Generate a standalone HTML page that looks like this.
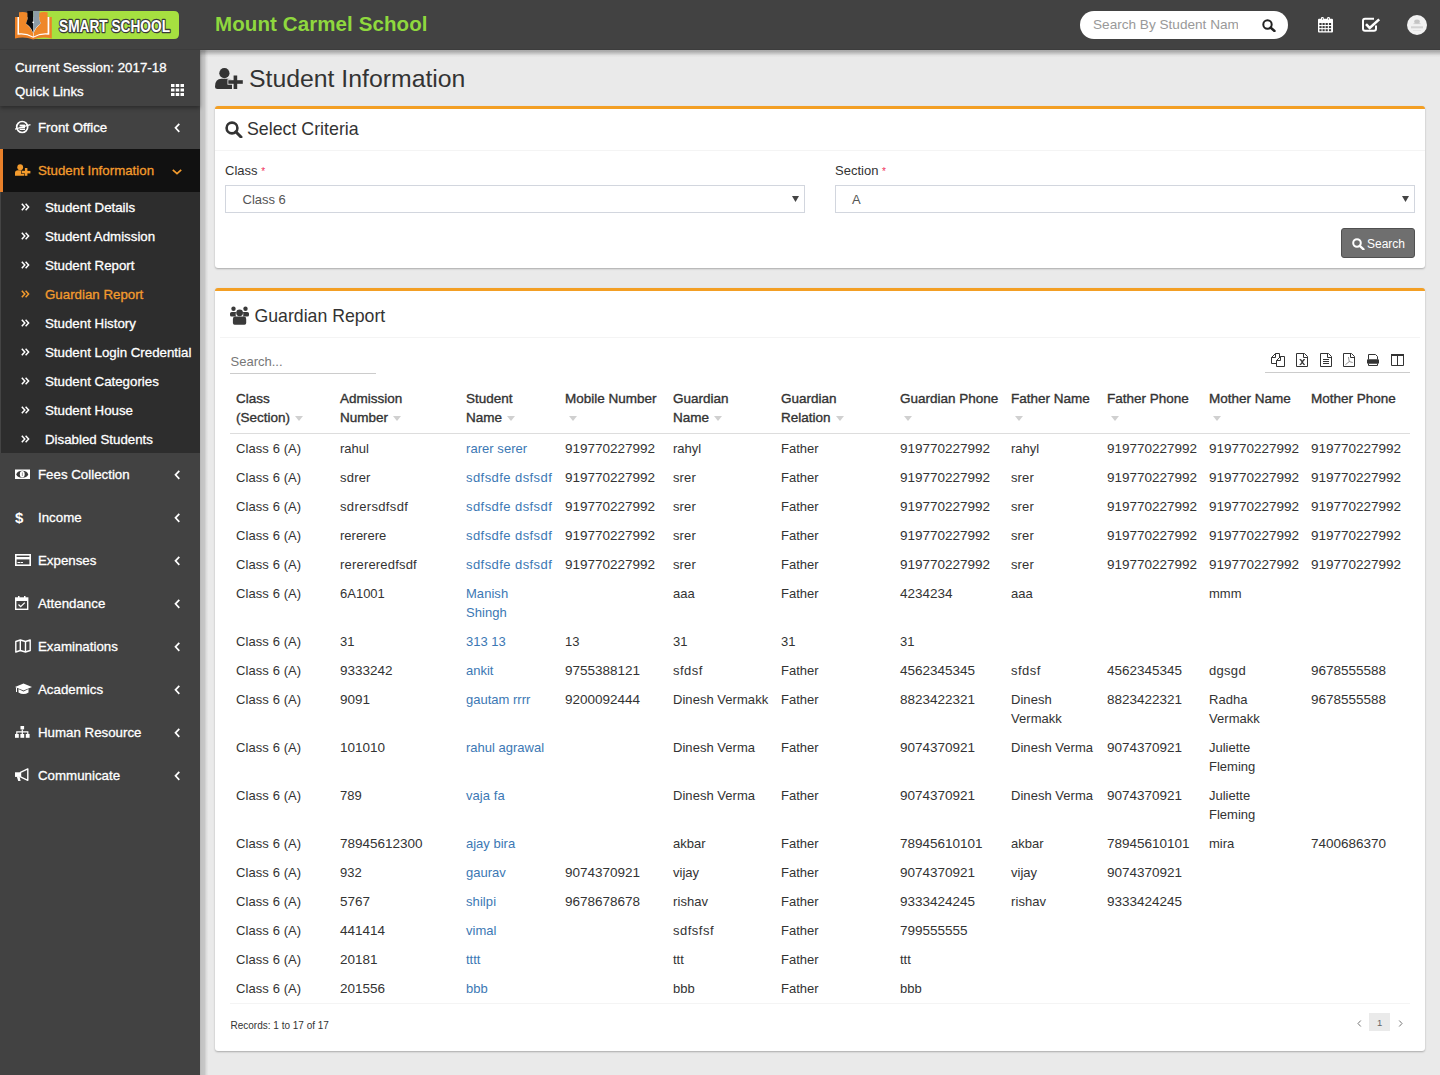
<!DOCTYPE html>
<html><head><meta charset="utf-8">
<style>
*{box-sizing:border-box}
svg{display:block}
html,body{margin:0;padding:0;width:1440px;height:1075px;overflow:hidden;background:#eaeaea;font-family:"Liberation Sans",sans-serif;color:#333}
.a{position:absolute;white-space:nowrap}
#hdr{position:absolute;left:0;top:0;width:1440px;height:50px;background:#424242;z-index:5;border-bottom:1px solid #3c3c3c}
#side{position:absolute;left:0;top:50px;width:200px;height:1025px;background:#424242;z-index:4}
#content{position:absolute;left:0;top:0;width:1440px;height:1075px;background:#eaeaea}
.logo{position:absolute;left:33px;top:11px;width:146px;height:29px;background:#a8e03e;border-radius:0 5px 5px 0}
.logotxt{position:absolute;left:59px;top:16px;font-weight:bold;font-size:17px;color:#fff;letter-spacing:-0.5px;transform:scaleX(.84);transform-origin:0 0;text-shadow:-1px -1px 0 #333,1px -1px 0 #333,-1px 1px 0 #333,1px 1px 0 #333}
.title{left:215px;top:12px;font-size:20.5px;font-weight:bold;color:#8fd83e;letter-spacing:0.1px}
.srch{left:1080px;top:11px;width:208px;height:28px;background:#fff;border-radius:14px}
.srch span{position:absolute;left:13px;top:6px;width:145px;overflow:hidden;font-size:13.6px;color:#999;white-space:nowrap}
.up{left:0;top:0;width:200px;height:56px;background:#424242;box-shadow:0 2px 4px rgba(0,0,0,.35)}
.st{font-size:13.3px;font-weight:normal;color:#fff;-webkit-text-stroke:0.3px #fff}
.mi{position:absolute;left:0;width:200px;height:43px}
.mi .t{position:absolute;left:38px;top:14px;font-size:13.3px;font-weight:normal;-webkit-text-stroke:0.3px currentColor;color:#fff;white-space:nowrap}
.mi .ic{position:absolute;left:15px;top:14px;width:16px;height:14px}
.mi .ch{position:absolute;left:174px;top:17px}
.act{background:#111;border-left:3px solid #e8802a}
.act .t{left:35px;color:#f39b2d}
.act .ic{left:12px}
.act .ch{left:169px;top:20px}
.sub{position:absolute;left:0;top:142px;width:200px;height:261px;background:#2d2d2d;border-left:1px solid #444}
.si{position:absolute;left:0;width:199px;height:29px}
.si .t{position:absolute;left:44px;top:7.5px;font-size:13.3px;font-weight:normal;-webkit-text-stroke:0.3px currentColor;color:#fff;white-space:nowrap}
.si .ic{position:absolute;left:20px;top:11px}

.box{background:#fff;border-top:3px solid #f39f24;border-radius:3px;box-shadow:0 1px 2px rgba(0,0,0,.28)}
.sel{background:#fff;border:1px solid #d2d6de}
.btn{background:#6f6f6f;border:1px solid #505050;border-radius:3px}
.th{font-size:13.5px;font-weight:normal;line-height:19px;color:#333;-webkit-text-stroke:0.35px #333}
.sa{display:inline-block;width:0;height:0;border-left:4px solid transparent;border-right:4px solid transparent;border-top:5px solid #d0d0d0;vertical-align:1px}
.td{font-size:13px;line-height:19px;color:#333}
.td.num{font-size:13.5px}
.lk{color:#3c78b4}
</style></head><body>
<div id="content"><svg class="a" style="left:215px;top:68px" width="29" height="21" viewBox="0 0 29 21"><circle cx="9.4" cy="5.2" r="5.1" fill="#333"/><path d="M0 18.5 Q0 10.8 6.5 10.8 L12.5 10.8 Q15.5 10.8 17 12 L17 21 L2.5 21 Q0 21 0 18.5 Z" fill="#333"/><rect x="17" y="7" width="6" height="14" fill="#eaeaea"/><rect x="12.5" y="11.2" width="15.6" height="5.5" fill="#eaeaea"/><rect x="18.6" y="7.5" width="3.6" height="13.5" fill="#333"/><rect x="13.3" y="12.2" width="14.5" height="3.6" fill="#333"/></svg>
<div class="a" style="left:249px;top:67.01px;font-size:24.8px;line-height:1;color:#333">Student Information</div>
<div class="a box" style="left:215px;top:106px;width:1210px;height:162px"></div>
<svg class="a" style="left:225px;top:121px" width="18" height="17" viewBox="0 0 18 17"><circle cx="7" cy="7" r="5.4" stroke="#333" stroke-width="2.6" fill="none"/><path d="M10.8 10.8 L16 16" stroke="#333" stroke-width="3" stroke-linecap="round"/></svg>
<div class="a" style="left:247px;top:120.93px;font-size:17.8px;line-height:1;color:#333">Select Criteria</div>
<div class="a" style="left:215px;top:150px;width:1210px;height:1px;background:#f4f4f4"></div>
<div class="a" style="left:225px;top:163.80px;font-size:13px;line-height:1;color:#333">Class <span style="color:#f0305a;font-size:10px;position:relative;top:0px">*</span></div>
<div class="a" style="left:835px;top:163.80px;font-size:13px;line-height:1;color:#333">Section <span style="color:#f0305a;font-size:10px;position:relative;top:0px">*</span></div>
<div class="a sel" style="left:225px;top:185px;width:580px;height:28px"></div>
<div class="a sel" style="left:835px;top:185px;width:580px;height:28px"></div>
<div class="a" style="left:242.5px;top:192.75px;font-size:13px;line-height:1;color:#555">Class 6</div>
<div class="a" style="left:852px;top:192.75px;font-size:13px;line-height:1;color:#555">A</div>
<div class="a" style="left:792px;top:196px"><svg width="7" height="6" viewBox="0 0 7 6"><path d="M0 0 L7 0 L3.5 6 Z" fill="#444"/></svg></div>
<div class="a" style="left:1402px;top:196px"><svg width="7" height="6" viewBox="0 0 7 6"><path d="M0 0 L7 0 L3.5 6 Z" fill="#444"/></svg></div>
<div class="a btn" style="left:1341px;top:228px;width:74px;height:30px"></div>
<svg class="a" style="left:1352px;top:238px" width="13" height="12" viewBox="0 0 13 12"><circle cx="5" cy="5" r="3.8" stroke="#fff" stroke-width="2" fill="none"/><path d="M7.8 7.8 L11.5 11.3" stroke="#fff" stroke-width="2.4" stroke-linecap="round"/></svg>
<div class="a" style="left:1367px;top:237.74px;font-size:12px;line-height:1;color:#fff">Search</div>
<div class="a box" style="left:215px;top:288px;width:1210px;height:763px"></div>
<svg class="a" style="left:230px;top:306px" width="20" height="19" viewBox="0 0 20 19"><g fill="#3a3a3a"><circle cx="3.5" cy="2.8" r="2.2"/><circle cx="15.5" cy="2.8" r="2.2"/><path d="M0 7.6 Q0 5.9 1.7 5.9 L5.2 5.9 Q5.8 5.9 6.1 6.3 Q5.6 7.5 5.7 8.8 Q5.7 9.8 6 10.6 L1.5 10.6 Q0 10.6 0 9.1 Z"/><path d="M19 7.6 Q19 5.9 17.3 5.9 L13.8 5.9 Q13.2 5.9 12.9 6.3 Q13.4 7.5 13.3 8.8 Q13.3 9.8 13 10.6 L17.5 10.6 Q19 10.6 19 9.1 Z"/><circle cx="9.6" cy="6.8" r="3.4"/><path d="M2.9 13 Q2.9 10.6 5.3 10.6 L13.8 10.6 Q16.2 10.6 16.2 13 L16.2 17 Q16.2 18.7 14.5 18.7 L4.6 18.7 Q2.9 18.7 2.9 17 Z"/></g></svg>
<div class="a" style="left:254.5px;top:308.02px;font-size:17.7px;line-height:1;color:#333">Guardian Report</div>
<div class="a" style="left:220px;top:337px;width:1200px;height:1px;background:#f4f4f4"></div>
<div class="a" style="left:230.5px;top:355.00px;font-size:13px;line-height:1;color:#777">Search...</div>
<div class="a" style="left:230px;top:373px;width:146px;height:1px;background:#ccc"></div>
<div class="a" style="left:1265px;top:372px;width:145px;height:1px;background:#ccc"></div>
<svg class="a" style="left:1268px;top:350px" width="150" height="20" viewBox="0 0 150 20"><g stroke="#333" stroke-width="1" fill="none" stroke-linejoin="miter">
<path d="M11.5 7 L11.5 3.5 L7.5 3.5 L3.5 7.5 L3.5 13.5 L8.5 13.5"/><path d="M7.5 3.5 L7.5 7.5 L3.5 7.5"/>
<path d="M12.5 6.5 L16.5 6.5 L16.5 16.5 L8.5 16.5 L8.5 10.5 Z"/><path d="M12.5 6.5 L12.5 10.5 L8.5 10.5"/>
<path d="M28.5 3.5 L36.5 3.5 L39.5 6.5 L39.5 16.5 L28.5 16.5 Z"/><path d="M35.5 3.5 L35.5 7.5 L39.5 7.5"/>
<path d="M52.5 3.5 L60.5 3.5 L63.5 6.5 L63.5 16.5 L52.5 16.5 Z"/><path d="M59.5 3.5 L59.5 7.5 L63.5 7.5"/>
<path d="M55 9.5 L61 9.5 M55 11.5 L61 11.5 M55 13.5 L61 13.5"/>
<path d="M75.5 3.5 L83.5 3.5 L86.5 6.5 L86.5 16.5 L75.5 16.5 Z"/><path d="M82.5 3.5 L82.5 7.5 L86.5 7.5"/>
<path d="M80.4 7 L81.3 11.6 L77.4 14.7 M81.3 11.6 L84.7 12.5" stroke="#777" stroke-width="0.8"/>
<path d="M100.5 9.5 L100.5 4.5 L107.5 4.5 L109.5 6.5 L109.5 9.5"/><path d="M100.5 13.5 L100.5 15.5 L109.5 15.5 L109.5 13.5"/>
<path d="M123.5 5.5 L123.5 15.5 L135.5 15.5 L135.5 5.5 M129.5 5.5 L129.5 15.5"/>
</g>
<path d="M31.5 9.5 L33 9.5 L34.3 11.3 L35.6 9.5 L37 9.5 M31.6 14.6 L33 14.6 L34.3 12.6 L35.6 14.6 L37 14.6" stroke="#333" stroke-width="0.8" fill="none"/>
<path d="M32.4 9.6 L36.2 14.5 M36.2 9.6 L32.4 14.5" stroke="#333" stroke-width="1.1"/>
<rect x="99" y="9.3" width="12" height="4.4" rx="1" fill="#333"/>
<rect x="123" y="4" width="13" height="2" fill="#333"/>
</svg>
<div class="a th" style="left:236px;top:389px">Class</div>
<div class="a th" style="left:236px;top:408px">(Section)<span class="sa" style="margin-left:5px"></span></div>
<div class="a th" style="left:340px;top:389px">Admission</div>
<div class="a th" style="left:340px;top:408px">Number<span class="sa" style="margin-left:5px"></span></div>
<div class="a th" style="left:466px;top:389px">Student</div>
<div class="a th" style="left:466px;top:408px">Name<span class="sa" style="margin-left:5px"></span></div>
<div class="a th" style="left:565px;top:389px">Mobile Number</div>
<div class="a th" style="left:569px;top:408px"><span class="sa"></span></div>
<div class="a th" style="left:673px;top:389px">Guardian</div>
<div class="a th" style="left:673px;top:408px">Name<span class="sa" style="margin-left:5px"></span></div>
<div class="a th" style="left:781px;top:389px">Guardian</div>
<div class="a th" style="left:781px;top:408px">Relation<span class="sa" style="margin-left:5px"></span></div>
<div class="a th" style="left:900px;top:389px">Guardian Phone</div>
<div class="a th" style="left:904px;top:408px"><span class="sa"></span></div>
<div class="a th" style="left:1011px;top:389px">Father Name</div>
<div class="a th" style="left:1015px;top:408px"><span class="sa"></span></div>
<div class="a th" style="left:1107px;top:389px">Father Phone</div>
<div class="a th" style="left:1111px;top:408px"><span class="sa"></span></div>
<div class="a th" style="left:1209px;top:389px">Mother Name</div>
<div class="a th" style="left:1213px;top:408px"><span class="sa"></span></div>
<div class="a th" style="left:1311px;top:389px">Mother Phone</div>
<div class="a" style="left:230px;top:433px;width:1180px;height:1px;background:#ddd"></div>
<div class="a td" style="left:236px;top:439px;letter-spacing:0.09px;">Class 6 (A)</div>
<div class="a td" style="left:340px;top:439px;">rahul</div>
<div class="a td lk" style="left:466px;top:439px;letter-spacing:0.05px;">rarer serer</div>
<div class="a td num" style="left:565px;top:439px;">919770227992</div>
<div class="a td" style="left:673px;top:439px;">rahyl</div>
<div class="a td" style="left:781px;top:439px;">Father</div>
<div class="a td num" style="left:900px;top:439px;">919770227992</div>
<div class="a td" style="left:1011px;top:439px;">rahyl</div>
<div class="a td num" style="left:1107px;top:439px;">919770227992</div>
<div class="a td num" style="left:1209px;top:439px;">919770227992</div>
<div class="a td num" style="left:1311px;top:439px;">919770227992</div>
<div class="a td" style="left:236px;top:468px;letter-spacing:0.09px;">Class 6 (A)</div>
<div class="a td" style="left:340px;top:468px;letter-spacing:0.20px;">sdrer</div>
<div class="a td lk" style="left:466px;top:468px;letter-spacing:0.43px;">sdfsdfe dsfsdf</div>
<div class="a td num" style="left:565px;top:468px;">919770227992</div>
<div class="a td" style="left:673px;top:468px;letter-spacing:0.12px;">srer</div>
<div class="a td" style="left:781px;top:468px;">Father</div>
<div class="a td num" style="left:900px;top:468px;">919770227992</div>
<div class="a td" style="left:1011px;top:468px;letter-spacing:0.12px;">srer</div>
<div class="a td num" style="left:1107px;top:468px;">919770227992</div>
<div class="a td num" style="left:1209px;top:468px;">919770227992</div>
<div class="a td num" style="left:1311px;top:468px;">919770227992</div>
<div class="a td" style="left:236px;top:497px;letter-spacing:0.09px;">Class 6 (A)</div>
<div class="a td" style="left:340px;top:497px;letter-spacing:0.36px;">sdrersdfsdf</div>
<div class="a td lk" style="left:466px;top:497px;letter-spacing:0.43px;">sdfsdfe dsfsdf</div>
<div class="a td num" style="left:565px;top:497px;">919770227992</div>
<div class="a td" style="left:673px;top:497px;letter-spacing:0.12px;">srer</div>
<div class="a td" style="left:781px;top:497px;">Father</div>
<div class="a td num" style="left:900px;top:497px;">919770227992</div>
<div class="a td" style="left:1011px;top:497px;letter-spacing:0.12px;">srer</div>
<div class="a td num" style="left:1107px;top:497px;">919770227992</div>
<div class="a td num" style="left:1209px;top:497px;">919770227992</div>
<div class="a td num" style="left:1311px;top:497px;">919770227992</div>
<div class="a td" style="left:236px;top:526px;letter-spacing:0.09px;">Class 6 (A)</div>
<div class="a td" style="left:340px;top:526px;">rererere</div>
<div class="a td lk" style="left:466px;top:526px;letter-spacing:0.43px;">sdfsdfe dsfsdf</div>
<div class="a td num" style="left:565px;top:526px;">919770227992</div>
<div class="a td" style="left:673px;top:526px;letter-spacing:0.12px;">srer</div>
<div class="a td" style="left:781px;top:526px;">Father</div>
<div class="a td num" style="left:900px;top:526px;">919770227992</div>
<div class="a td" style="left:1011px;top:526px;letter-spacing:0.12px;">srer</div>
<div class="a td num" style="left:1107px;top:526px;">919770227992</div>
<div class="a td num" style="left:1209px;top:526px;">919770227992</div>
<div class="a td num" style="left:1311px;top:526px;">919770227992</div>
<div class="a td" style="left:236px;top:555px;letter-spacing:0.09px;">Class 6 (A)</div>
<div class="a td" style="left:340px;top:555px;letter-spacing:0.19px;">rerereredfsdf</div>
<div class="a td lk" style="left:466px;top:555px;letter-spacing:0.43px;">sdfsdfe dsfsdf</div>
<div class="a td num" style="left:565px;top:555px;">919770227992</div>
<div class="a td" style="left:673px;top:555px;letter-spacing:0.12px;">srer</div>
<div class="a td" style="left:781px;top:555px;">Father</div>
<div class="a td num" style="left:900px;top:555px;">919770227992</div>
<div class="a td" style="left:1011px;top:555px;letter-spacing:0.12px;">srer</div>
<div class="a td num" style="left:1107px;top:555px;">919770227992</div>
<div class="a td num" style="left:1209px;top:555px;">919770227992</div>
<div class="a td num" style="left:1311px;top:555px;">919770227992</div>
<div class="a td" style="left:236px;top:584px;letter-spacing:0.09px;">Class 6 (A)</div>
<div class="a td" style="left:340px;top:584px;">6A1001</div>
<div class="a td lk" style="left:466px;top:584px;letter-spacing:0.04px;">Manish<br>Shingh</div>
<div class="a td" style="left:673px;top:584px;">aaa</div>
<div class="a td" style="left:781px;top:584px;">Father</div>
<div class="a td num" style="left:900px;top:584px;">4234234</div>
<div class="a td" style="left:1011px;top:584px;">aaa</div>
<div class="a td" style="left:1209px;top:584px;">mmm</div>
<div class="a td" style="left:236px;top:632px;letter-spacing:0.09px;">Class 6 (A)</div>
<div class="a td" style="left:340px;top:632px;">31</div>
<div class="a td lk" style="left:466px;top:632px;">313 13</div>
<div class="a td" style="left:565px;top:632px;">13</div>
<div class="a td" style="left:673px;top:632px;">31</div>
<div class="a td" style="left:781px;top:632px;">31</div>
<div class="a td" style="left:900px;top:632px;">31</div>
<div class="a td" style="left:236px;top:661px;letter-spacing:0.09px;">Class 6 (A)</div>
<div class="a td num" style="left:340px;top:661px;">9333242</div>
<div class="a td lk" style="left:466px;top:661px;">ankit</div>
<div class="a td num" style="left:565px;top:661px;">9755388121</div>
<div class="a td" style="left:673px;top:661px;letter-spacing:0.50px;">sfdsf</div>
<div class="a td" style="left:781px;top:661px;">Father</div>
<div class="a td num" style="left:900px;top:661px;">4562345345</div>
<div class="a td" style="left:1011px;top:661px;letter-spacing:0.50px;">sfdsf</div>
<div class="a td num" style="left:1107px;top:661px;">4562345345</div>
<div class="a td" style="left:1209px;top:661px;letter-spacing:0.30px;">dgsgd</div>
<div class="a td num" style="left:1311px;top:661px;">9678555588</div>
<div class="a td" style="left:236px;top:690px;letter-spacing:0.09px;">Class 6 (A)</div>
<div class="a td num" style="left:340px;top:690px;">9091</div>
<div class="a td lk" style="left:466px;top:690px;">gautam rrrr</div>
<div class="a td num" style="left:565px;top:690px;">9200092444</div>
<div class="a td" style="left:673px;top:690px;letter-spacing:0.04px;">Dinesh Vermakk</div>
<div class="a td" style="left:781px;top:690px;">Father</div>
<div class="a td num" style="left:900px;top:690px;">8823422321</div>
<div class="a td" style="left:1011px;top:690px;letter-spacing:0.04px;">Dinesh<br>Vermakk</div>
<div class="a td num" style="left:1107px;top:690px;">8823422321</div>
<div class="a td" style="left:1209px;top:690px;letter-spacing:0.04px;">Radha<br>Vermakk</div>
<div class="a td num" style="left:1311px;top:690px;">9678555588</div>
<div class="a td" style="left:236px;top:738px;letter-spacing:0.09px;">Class 6 (A)</div>
<div class="a td num" style="left:340px;top:738px;">101010</div>
<div class="a td lk" style="left:466px;top:738px;">rahul agrawal</div>
<div class="a td" style="left:673px;top:738px;letter-spacing:0.04px;">Dinesh Verma</div>
<div class="a td" style="left:781px;top:738px;">Father</div>
<div class="a td num" style="left:900px;top:738px;">9074370921</div>
<div class="a td" style="left:1011px;top:738px;letter-spacing:0.04px;">Dinesh Verma</div>
<div class="a td num" style="left:1107px;top:738px;">9074370921</div>
<div class="a td" style="left:1209px;top:738px;">Juliette<br>Fleming</div>
<div class="a td" style="left:236px;top:786px;letter-spacing:0.09px;">Class 6 (A)</div>
<div class="a td" style="left:340px;top:786px;">789</div>
<div class="a td lk" style="left:466px;top:786px;letter-spacing:0.07px;">vaja fa</div>
<div class="a td" style="left:673px;top:786px;letter-spacing:0.04px;">Dinesh Verma</div>
<div class="a td" style="left:781px;top:786px;">Father</div>
<div class="a td num" style="left:900px;top:786px;">9074370921</div>
<div class="a td" style="left:1011px;top:786px;letter-spacing:0.04px;">Dinesh Verma</div>
<div class="a td num" style="left:1107px;top:786px;">9074370921</div>
<div class="a td" style="left:1209px;top:786px;">Juliette<br>Fleming</div>
<div class="a td" style="left:236px;top:834px;letter-spacing:0.09px;">Class 6 (A)</div>
<div class="a td num" style="left:340px;top:834px;">78945612300</div>
<div class="a td lk" style="left:466px;top:834px;">ajay bira</div>
<div class="a td" style="left:673px;top:834px;">akbar</div>
<div class="a td" style="left:781px;top:834px;">Father</div>
<div class="a td num" style="left:900px;top:834px;">78945610101</div>
<div class="a td" style="left:1011px;top:834px;">akbar</div>
<div class="a td num" style="left:1107px;top:834px;">78945610101</div>
<div class="a td" style="left:1209px;top:834px;">mira</div>
<div class="a td num" style="left:1311px;top:834px;">7400686370</div>
<div class="a td" style="left:236px;top:863px;letter-spacing:0.09px;">Class 6 (A)</div>
<div class="a td" style="left:340px;top:863px;">932</div>
<div class="a td lk" style="left:466px;top:863px;">gaurav</div>
<div class="a td num" style="left:565px;top:863px;">9074370921</div>
<div class="a td" style="left:673px;top:863px;">vijay</div>
<div class="a td" style="left:781px;top:863px;">Father</div>
<div class="a td num" style="left:900px;top:863px;">9074370921</div>
<div class="a td" style="left:1011px;top:863px;">vijay</div>
<div class="a td num" style="left:1107px;top:863px;">9074370921</div>
<div class="a td" style="left:236px;top:892px;letter-spacing:0.09px;">Class 6 (A)</div>
<div class="a td num" style="left:340px;top:892px;">5767</div>
<div class="a td lk" style="left:466px;top:892px;letter-spacing:0.08px;">shilpi</div>
<div class="a td num" style="left:565px;top:892px;">9678678678</div>
<div class="a td" style="left:673px;top:892px;letter-spacing:0.08px;">rishav</div>
<div class="a td" style="left:781px;top:892px;">Father</div>
<div class="a td num" style="left:900px;top:892px;">9333424245</div>
<div class="a td" style="left:1011px;top:892px;letter-spacing:0.08px;">rishav</div>
<div class="a td num" style="left:1107px;top:892px;">9333424245</div>
<div class="a td" style="left:236px;top:921px;letter-spacing:0.09px;">Class 6 (A)</div>
<div class="a td num" style="left:340px;top:921px;">441414</div>
<div class="a td lk" style="left:466px;top:921px;">vimal</div>
<div class="a td" style="left:673px;top:921px;letter-spacing:0.50px;">sdfsfsf</div>
<div class="a td" style="left:781px;top:921px;">Father</div>
<div class="a td num" style="left:900px;top:921px;">799555555</div>
<div class="a td" style="left:236px;top:950px;letter-spacing:0.09px;">Class 6 (A)</div>
<div class="a td num" style="left:340px;top:950px;">20181</div>
<div class="a td lk" style="left:466px;top:950px;">tttt</div>
<div class="a td" style="left:673px;top:950px;">ttt</div>
<div class="a td" style="left:781px;top:950px;">Father</div>
<div class="a td" style="left:900px;top:950px;">ttt</div>
<div class="a td" style="left:236px;top:979px;letter-spacing:0.09px;">Class 6 (A)</div>
<div class="a td num" style="left:340px;top:979px;">201556</div>
<div class="a td lk" style="left:466px;top:979px;">bbb</div>
<div class="a td" style="left:673px;top:979px;">bbb</div>
<div class="a td" style="left:781px;top:979px;">Father</div>
<div class="a td" style="left:900px;top:979px;">bbb</div>
<div class="a" style="left:230px;top:1003px;width:1180px;height:1px;background:#f4f4f4"></div>
<div class="a" style="left:230.5px;top:1020.94px;font-size:10px;line-height:1;color:#333">Records: 1 to 17 of 17</div>
<div class="a" style="left:1369px;top:1013px;width:21px;height:18px;background:#eaeaea"></div>
<div class="a" style="left:1377px;top:1017.53px;font-size:10px;line-height:1;color:#666;font-size:9.5px">1</div>
<svg class="a" style="left:1357px;top:1020px" width="5" height="7" viewBox="0 0 5 7"><path d="M3.8 0.5 L1 3.5 L3.8 6.5" stroke="#666" stroke-width="0.9" fill="none"/></svg>
<svg class="a" style="left:1398px;top:1020px" width="5" height="7" viewBox="0 0 5 7"><path d="M1.2 0.5 L4 3.5 L1.2 6.5" stroke="#666" stroke-width="0.9" fill="none"/></svg></div>
<div id="hdr">
  <svg class="a" style="left:12px;top:8px" width="170" height="34" viewBox="0 0 170 34">
    <path d="M20.8 3 L162 3 Q167 3 167 8 L167 26 Q167 31 162 31 L20.8 31 Z" fill="#a6e040"/>
    <path d="M3 9 L39.8 9 L39.8 30.5 Q30 28.3 21.2 31.4 Q12 28.3 3 30.5 Z" fill="#ec8127"/>
    <path d="M5.5 9 L37.3 9 L37.3 26.8 Q29 25.3 21.2 29.8 Q13 25.3 5.5 26.8 Z" fill="#fff"/>
    <path d="M7 4.3 Q12.5 3.4 15.6 5 L15.6 12 Q14.2 14 14 15.5 Q18.5 19 21 25 L21 28.6 Q14 24.5 7 25.3 Z" fill="#ef8728"/>
    <path d="M35.6 4.3 Q30 3.4 27.2 5 L27.2 12 Q28.6 14 28.6 15.5 Q24.2 19 21.6 25 L21.6 28.6 Q28.6 24.5 35.6 25.3 Z" fill="#ef8728"/>
    <path d="M15.3 3.1 L21.2 3.1 L21.2 25 Q19.5 19.5 14 15.5 Q16.5 11 15.6 6 Z" fill="#0d0d0d"/>
    <path d="M21.2 3.1 L27.8 3.1 L27.2 6 Q26.3 11 28.6 15.5 Q23.2 19.5 21.2 25 Z" fill="#8d9ca6"/>
    <circle cx="21.2" cy="14.3" r="0.9" fill="#fff"/>
    <text x="47" y="24" font-family="Liberation Sans" font-weight="bold" font-size="17.3" textLength="111" lengthAdjust="spacingAndGlyphs" fill="#fff" stroke="#3a3a3a" stroke-width="2.6" stroke-linejoin="round" paint-order="stroke">SMART SCHOOL</text>
  </svg>
  <div class="a title">Mount Carmel School</div>
  <div class="a srch"><span>Search By Student Name</span>
    <svg class="a" style="left:182px;top:8px" width="14" height="13" viewBox="0 0 14 13"><circle cx="5.5" cy="5.5" r="4.2" stroke="#222" stroke-width="2" fill="none"/><path d="M8.5 8.5 L12.5 12" stroke="#222" stroke-width="2.4" stroke-linecap="round"/></svg>
  </div>
  <svg class="a" style="left:1318px;top:17px" width="16" height="16" viewBox="0 0 16 16">
    <rect x="0" y="1.8" width="15" height="13.7" rx="1" fill="#fff"/><rect x="1.4" y="6" width="2.2" height="2" fill="#3a3a3a"/><rect x="1.4" y="9.1" width="2.2" height="2" fill="#3a3a3a"/><rect x="1.4" y="12.2" width="2.2" height="2" fill="#3a3a3a"/><rect x="4.5" y="6" width="2.2" height="2" fill="#3a3a3a"/><rect x="4.5" y="9.1" width="2.2" height="2" fill="#3a3a3a"/><rect x="4.5" y="12.2" width="2.2" height="2" fill="#3a3a3a"/><rect x="7.6" y="6" width="2.2" height="2" fill="#3a3a3a"/><rect x="7.6" y="9.1" width="2.2" height="2" fill="#3a3a3a"/><rect x="7.6" y="12.2" width="2.2" height="2" fill="#3a3a3a"/><rect x="10.9" y="6" width="2.2" height="2" fill="#3a3a3a"/><rect x="10.9" y="9.1" width="2.2" height="2" fill="#3a3a3a"/><rect x="10.9" y="12.2" width="2.2" height="2" fill="#3a3a3a"/>
    <rect x="3" y="0" width="2.8" height="3.2" rx="1" fill="#fff"/><rect x="9.1" y="0" width="2.8" height="3.2" rx="1" fill="#fff"/>
    <rect x="4" y="1" width="0.9" height="1.8" fill="#888"/><rect x="10.1" y="1" width="0.9" height="1.8" fill="#888"/>
  </svg>
  <svg class="a" style="left:1361px;top:17px" width="20" height="16" viewBox="0 0 20 16">
    <path d="M13 1.8 L4 1.8 Q2 1.8 2 3.8 L2 11.7 Q2 13.7 4 13.7 L13 13.7 Q15 13.7 15 11.7 L15 8.5" stroke="#fff" stroke-width="2" fill="none"/>
    <path d="M5 7.2 L8.7 11 L18.2 2.4" stroke="#fff" stroke-width="2.6" fill="none"/>
  </svg>
  <div class="a" style="left:1407px;top:15px;width:20px;height:20px;border-radius:50%;background:#f1f1f1"><svg class="a" style="left:0;top:0" width="20" height="20" viewBox="0 0 20 20"><ellipse cx="10" cy="6.6" rx="2.8" ry="2.2" fill="#c4c4c4"/><rect x="6.5" y="8.3" width="7" height="0.8" fill="#c8c8c8"/><rect x="4" y="11.3" width="12" height="2" fill="#d2d2d2"/><rect x="6" y="15.2" width="8" height="0.6" fill="#dadada"/></svg></div>
</div>
<div class="a" style="left:0;top:50px;width:1440px;height:8px;z-index:3;background:linear-gradient(to bottom,rgba(0,0,0,.28) 0,rgba(0,0,0,.26) 1.5px,rgba(0,0,0,.15) 3.5px,rgba(0,0,0,.04) 5.5px,rgba(0,0,0,0) 7.5px)"></div>
<div class="a" style="left:200px;top:50px;width:9px;height:1025px;z-index:3;background:linear-gradient(to right,rgba(0,0,0,.22) 0,rgba(0,0,0,.17) 1.5px,rgba(0,0,0,.15) 4.5px,rgba(0,0,0,.05) 6.5px,rgba(0,0,0,0) 8.5px)"></div>
<div id="side">
  <div class="a up">
    <div class="a st" style="left:15px;top:9.5px">Current Session: 2017-18</div>
    <div class="a st" style="left:15px;top:33.5px">Quick Links</div>
    <svg class="a" style="left:171px;top:34px" width="13" height="12" viewBox="0 0 13 12" fill="#fff">
      <rect x="0" y="0" width="3.5" height="3"/><rect x="4.75" y="0" width="3.5" height="3"/><rect x="9.5" y="0" width="3.5" height="3"/>
      <rect x="0" y="4.5" width="3.5" height="3"/><rect x="4.75" y="4.5" width="3.5" height="3"/><rect x="9.5" y="4.5" width="3.5" height="3"/>
      <rect x="0" y="9" width="3.5" height="3"/><rect x="4.75" y="9" width="3.5" height="3"/><rect x="9.5" y="9" width="3.5" height="3"/>
    </svg>
  </div>
  <div class="mi" style="top:56px"><div class="ic"><svg width="17" height="14" viewBox="0 0 17 14"><circle cx="7.2" cy="7" r="5.5" stroke="#fff" stroke-width="1.7" fill="none"/><rect x="4.6" y="4.6" width="5.4" height="1.5" fill="#fff"/><rect x="4.6" y="6.6" width="5.4" height="1.5" fill="#fff"/><rect x="4.6" y="8.6" width="5.4" height="1.4" fill="#fff"/><path d="M-0.5 9.3 L15.5 4.6" stroke="#fff" stroke-width="1.2"/></svg></div><div class="t">Front Office</div><div class="ch"><svg width="7" height="10" viewBox="0 0 7 10"><path d="M5.3 0.8 L1.5 4.8 L5.3 8.8" stroke="#fff" stroke-width="1.7" fill="none"/></svg></div></div>
<div class="mi act" style="top:99px"><div class="ic"><svg width="17" height="14" viewBox="0 0 17 14"><circle cx="5.2" cy="4.2" r="2.9" fill="#f39b2d"/><path d="M0 12.8 L0 10 Q0 7.3 3 7.3 L7.5 7.3 Q9.5 7.3 10 8 L10 12.8 Z" fill="#f39b2d"/><path d="M9.3 4.3 L13 4.3 L13 7.3 L16 7.3 L16 11 L13 11 L13 13.5 L9.3 13.5 L9.3 11 L6.3 11 L6.3 7.3 L9.3 7.3 Z" fill="#111"/><rect x="9.9" y="5" width="2.5" height="7.8" fill="#f39b2d"/><rect x="6.9" y="7.9" width="8.5" height="2.5" fill="#f39b2d"/></svg></div><div class="t">Student Information</div><div class="ch"><svg width="10" height="6" viewBox="0 0 10 6"><path d="M0.8 0.8 L5 4.7 L9.2 0.8" stroke="#f39b2d" stroke-width="1.7" fill="none"/></svg></div></div>
<div class="sub"><div class="si" style="top:0px"><div class="ic"><svg width="9" height="8" viewBox="0 0 9 8"><path d="M0.8 0.8 L3.8 4 L0.8 7.2 M4.6 0.8 L7.6 4 L4.6 7.2" stroke="#fff" stroke-width="1.5" fill="none"/></svg></div><div class="t" style="color:#fff">Student Details</div></div><div class="si" style="top:29px"><div class="ic"><svg width="9" height="8" viewBox="0 0 9 8"><path d="M0.8 0.8 L3.8 4 L0.8 7.2 M4.6 0.8 L7.6 4 L4.6 7.2" stroke="#fff" stroke-width="1.5" fill="none"/></svg></div><div class="t" style="color:#fff">Student Admission</div></div><div class="si" style="top:58px"><div class="ic"><svg width="9" height="8" viewBox="0 0 9 8"><path d="M0.8 0.8 L3.8 4 L0.8 7.2 M4.6 0.8 L7.6 4 L4.6 7.2" stroke="#fff" stroke-width="1.5" fill="none"/></svg></div><div class="t" style="color:#fff">Student Report</div></div><div class="si" style="top:87px"><div class="ic"><svg width="9" height="8" viewBox="0 0 9 8"><path d="M0.8 0.8 L3.8 4 L0.8 7.2 M4.6 0.8 L7.6 4 L4.6 7.2" stroke="#f39b2d" stroke-width="1.5" fill="none"/></svg></div><div class="t" style="color:#f39b2d">Guardian Report</div></div><div class="si" style="top:116px"><div class="ic"><svg width="9" height="8" viewBox="0 0 9 8"><path d="M0.8 0.8 L3.8 4 L0.8 7.2 M4.6 0.8 L7.6 4 L4.6 7.2" stroke="#fff" stroke-width="1.5" fill="none"/></svg></div><div class="t" style="color:#fff">Student History</div></div><div class="si" style="top:145px"><div class="ic"><svg width="9" height="8" viewBox="0 0 9 8"><path d="M0.8 0.8 L3.8 4 L0.8 7.2 M4.6 0.8 L7.6 4 L4.6 7.2" stroke="#fff" stroke-width="1.5" fill="none"/></svg></div><div class="t" style="color:#fff">Student Login Credential</div></div><div class="si" style="top:174px"><div class="ic"><svg width="9" height="8" viewBox="0 0 9 8"><path d="M0.8 0.8 L3.8 4 L0.8 7.2 M4.6 0.8 L7.6 4 L4.6 7.2" stroke="#fff" stroke-width="1.5" fill="none"/></svg></div><div class="t" style="color:#fff">Student Categories</div></div><div class="si" style="top:203px"><div class="ic"><svg width="9" height="8" viewBox="0 0 9 8"><path d="M0.8 0.8 L3.8 4 L0.8 7.2 M4.6 0.8 L7.6 4 L4.6 7.2" stroke="#fff" stroke-width="1.5" fill="none"/></svg></div><div class="t" style="color:#fff">Student House</div></div><div class="si" style="top:232px"><div class="ic"><svg width="9" height="8" viewBox="0 0 9 8"><path d="M0.8 0.8 L3.8 4 L0.8 7.2 M4.6 0.8 L7.6 4 L4.6 7.2" stroke="#fff" stroke-width="1.5" fill="none"/></svg></div><div class="t" style="color:#fff">Disabled Students</div></div></div>
<div class="mi" style="top:403px"><div class="ic"><svg width="16" height="14" viewBox="0 0 16 14"><rect x="-0.5" y="2.5" width="15.5" height="9.5" fill="#fff"/><ellipse cx="7.25" cy="7.25" rx="5.8" ry="3.6" fill="#3a3a3a"/><ellipse cx="7.25" cy="7.25" rx="2.4" ry="3.3" fill="#fff"/><rect x="6.9" y="5.5" width="0.8" height="3.5" fill="#888"/></svg></div><div class="t">Fees Collection</div><div class="ch"><svg width="7" height="10" viewBox="0 0 7 10"><path d="M5.3 0.8 L1.5 4.8 L5.3 8.8" stroke="#fff" stroke-width="1.7" fill="none"/></svg></div></div>
<div class="mi" style="top:446px"><div class="ic"><svg width="16" height="14" viewBox="0 0 16 14"><text x="0" y="12.5" font-family="Liberation Sans" font-weight="bold" font-size="15" fill="#fff">$</text></svg></div><div class="t">Income</div><div class="ch"><svg width="7" height="10" viewBox="0 0 7 10"><path d="M5.3 0.8 L1.5 4.8 L5.3 8.8" stroke="#fff" stroke-width="1.7" fill="none"/></svg></div></div>
<div class="mi" style="top:489px"><div class="ic"><svg width="16" height="14" viewBox="0 0 16 14"><rect x="0.8" y="1.8" width="14.4" height="10.4" stroke="#fff" stroke-width="1.6" fill="none"/><rect x="0.8" y="4" width="14.4" height="2.4" fill="#fff"/><rect x="2.5" y="9" width="2.5" height="1" fill="#fff"/><rect x="5.5" y="9" width="2.5" height="1" fill="#fff"/></svg></div><div class="t">Expenses</div><div class="ch"><svg width="7" height="10" viewBox="0 0 7 10"><path d="M5.3 0.8 L1.5 4.8 L5.3 8.8" stroke="#fff" stroke-width="1.7" fill="none"/></svg></div></div>
<div class="mi" style="top:532px"><div class="ic"><svg width="16" height="14" viewBox="0 0 16 14"><rect x="0.7" y="2" width="12" height="11.3" stroke="#fff" stroke-width="1.4" fill="none"/><rect x="0.7" y="2" width="12" height="3" fill="#fff"/><rect x="3" y="0" width="1.5" height="2.5" fill="#fff"/><rect x="9" y="0" width="1.5" height="2.5" fill="#fff"/><path d="M3.5 8.5 L5.7 10.7 L9.8 6.6" stroke="#fff" stroke-width="1.3" fill="none"/></svg></div><div class="t">Attendance</div><div class="ch"><svg width="7" height="10" viewBox="0 0 7 10"><path d="M5.3 0.8 L1.5 4.8 L5.3 8.8" stroke="#fff" stroke-width="1.7" fill="none"/></svg></div></div>
<div class="mi" style="top:575px"><div class="ic"><svg width="16" height="14" viewBox="0 0 16 14"><path d="M0.8 2.5 L5.3 1 L10.5 2.5 L15.2 1 L15.2 11.5 L10.5 13 L5.3 11.5 L0.8 13 Z" stroke="#fff" stroke-width="1.4" fill="none" stroke-linejoin="round"/><path d="M5.3 1 L5.3 11.5 M10.5 2.5 L10.5 13" stroke="#fff" stroke-width="1.4"/></svg></div><div class="t">Examinations</div><div class="ch"><svg width="7" height="10" viewBox="0 0 7 10"><path d="M5.3 0.8 L1.5 4.8 L5.3 8.8" stroke="#fff" stroke-width="1.7" fill="none"/></svg></div></div>
<div class="mi" style="top:618px"><div class="ic"><svg width="17" height="14" viewBox="0 0 17 14"><path d="M0 5 L8.5 1.5 L17 5 L8.5 8.5 Z" fill="#fff"/><path d="M3.5 7 L3.5 10.5 Q8.5 13.5 13.5 10.5 L13.5 7 L8.5 9.5 Z" fill="#fff"/><path d="M1.5 5.5 L1.5 10" stroke="#fff" stroke-width="1"/></svg></div><div class="t">Academics</div><div class="ch"><svg width="7" height="10" viewBox="0 0 7 10"><path d="M5.3 0.8 L1.5 4.8 L5.3 8.8" stroke="#fff" stroke-width="1.7" fill="none"/></svg></div></div>
<div class="mi" style="top:661px"><div class="ic"><svg width="16" height="14" viewBox="0 0 16 14"><rect x="5.5" y="1" width="3.6" height="3.4" fill="#fff"/><path d="M7.3 4.4 L7.3 6.8 M1.8 9.2 L1.8 6.8 L12.8 6.8 L12.8 9.2 M7.3 6.8 L7.3 9.2" stroke="#fff" stroke-width="1.2" fill="none"/><rect x="0" y="9" width="3.8" height="3.8" fill="#fff"/><rect x="5.4" y="9" width="3.8" height="3.8" fill="#fff"/><rect x="10.8" y="9" width="3.8" height="3.8" fill="#fff"/></svg></div><div class="t">Human Resource</div><div class="ch"><svg width="7" height="10" viewBox="0 0 7 10"><path d="M5.3 0.8 L1.5 4.8 L5.3 8.8" stroke="#fff" stroke-width="1.7" fill="none"/></svg></div></div>
<div class="mi" style="top:704px"><div class="ic"><svg width="16" height="14" viewBox="0 0 16 14"><rect x="0" y="4.3" width="5.5" height="4.6" fill="#fff"/><path d="M5.5 4.3 L12.8 0.9 L12.8 12.3 L5.5 8.9 Z" stroke="#fff" stroke-width="1.4" fill="none" stroke-linejoin="round"/><path d="M1.8 8.5 L3.2 13 L5.6 13 L4.6 8.5 Z" fill="#fff"/></svg></div><div class="t">Communicate</div><div class="ch"><svg width="7" height="10" viewBox="0 0 7 10"><path d="M5.3 0.8 L1.5 4.8 L5.3 8.8" stroke="#fff" stroke-width="1.7" fill="none"/></svg></div></div>
</div>
</body></html>
